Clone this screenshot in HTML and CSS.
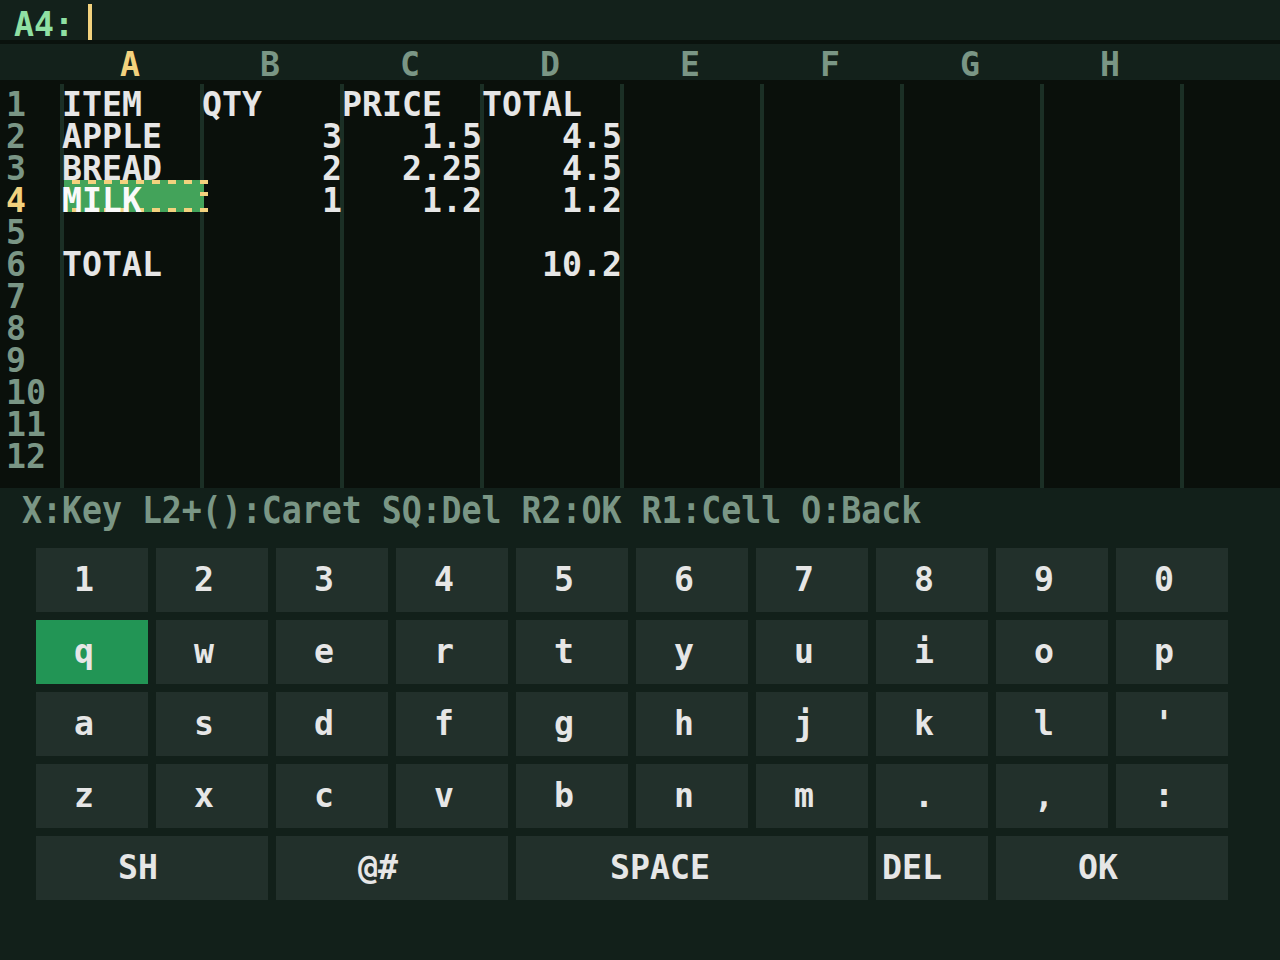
FILE: index.html
```html
<!doctype html>
<html lang="en">
  <head>
    <meta charset="UTF-8" />
    <title>Sheet</title>
    <link rel="stylesheet" href="styles.css">
  </head>
  <body>
    <div class="formula">
      <span class="ref">A4:</span><span class="caret"></span>
    </div>

    <div class="colhead">
      <div></div>
      <div class="on">A</div>
      <div>B</div>
      <div>C</div>
      <div>D</div>
      <div>E</div>
      <div>F</div>
      <div>G</div>
      <div>H</div>
      <div></div>
    </div>

    <div class="sheet">
      <div class="grid">
        <div class="row">
          <div class="rn">1</div><div>ITEM</div><div>QTY</div><div>PRICE</div><div>TOTAL</div>
        </div>
        <div class="row">
          <div class="rn">2</div><div>APPLE</div><div class="num">3</div><div class="num">1.5</div><div class="num">4.5</div>
        </div>
        <div class="row">
          <div class="rn">3</div><div>BREAD</div><div class="num">2</div><div class="num">2.25</div><div class="num">4.5</div>
        </div>
        <div class="row">
          <div class="rn on">4</div><div class="sel">MILK</div><div class="num">1</div><div class="num">1.2</div><div class="num">1.2</div>
        </div>
        <div class="row"><div class="rn">5</div></div>
        <div class="row">
          <div class="rn">6</div><div>TOTAL</div><div></div><div></div><div class="num">10.2</div>
        </div>
        <div class="row"><div class="rn">7</div></div>
        <div class="row"><div class="rn">8</div></div>
        <div class="row"><div class="rn">9</div></div>
        <div class="row"><div class="rn">10</div></div>
        <div class="row"><div class="rn">11</div></div>
        <div class="row"><div class="rn">12</div></div>
      </div>
    </div>

    <div class="hint"><span>X:Key L2+():Caret SQ:Del R2:OK R1:Cell O:Back</span></div>

    <div class="keys">
      <div class="key"><span>1</span></div>
      <div class="key"><span>2</span></div>
      <div class="key"><span>3</span></div>
      <div class="key"><span>4</span></div>
      <div class="key"><span>5</span></div>
      <div class="key"><span>6</span></div>
      <div class="key"><span>7</span></div>
      <div class="key"><span>8</span></div>
      <div class="key"><span>9</span></div>
      <div class="key"><span>0</span></div>

      <div class="key on"><span>q</span></div>
      <div class="key"><span>w</span></div>
      <div class="key"><span>e</span></div>
      <div class="key"><span>r</span></div>
      <div class="key"><span>t</span></div>
      <div class="key"><span>y</span></div>
      <div class="key"><span>u</span></div>
      <div class="key"><span>i</span></div>
      <div class="key"><span>o</span></div>
      <div class="key"><span>p</span></div>

      <div class="key"><span>a</span></div>
      <div class="key"><span>s</span></div>
      <div class="key"><span>d</span></div>
      <div class="key"><span>f</span></div>
      <div class="key"><span>g</span></div>
      <div class="key"><span>h</span></div>
      <div class="key"><span>j</span></div>
      <div class="key"><span>k</span></div>
      <div class="key"><span>l</span></div>
      <div class="key"><span>'</span></div>

      <div class="key"><span>z</span></div>
      <div class="key"><span>x</span></div>
      <div class="key"><span>c</span></div>
      <div class="key"><span>v</span></div>
      <div class="key"><span>b</span></div>
      <div class="key"><span>n</span></div>
      <div class="key"><span>m</span></div>
      <div class="key"><span>.</span></div>
      <div class="key"><span>,</span></div>
      <div class="key"><span>:</span></div>

      <div class="key w2 n2"><span>SH</span></div>
      <div class="key w2 n2"><span>@#</span></div>
      <div class="key w3 n5"><span>SPACE</span></div>
      <div class="key n3"><span>DEL</span></div>
      <div class="key w2 n2"><span>OK</span></div>
    </div>
  </body>
</html>
```

FILE: styles.css
```css
body {
  margin: 0;
  width: 1280px;
  height: 960px;
  overflow: hidden;
  background: #12201a;
  color: #e6e6e6;
  font-family: "DejaVu Sans Mono", "Liberation Mono", monospace;
  font-size: 33.2px;
  font-weight: bold;
}

/* formula bar */
.formula {
  display: flex;
  align-items: flex-start;
  height: 40px;
  padding-left: 14px;
  background: #13211b;
  border-bottom: 4px solid #0a120d;
}
.ref {
  color: #8fe0a3;
  line-height: 24px;
  padding-top: 12.5px;
}
.caret {
  width: 4px;
  height: 36px;
  margin: 4px 0 0 14px;
  background: #f2d27e;
}

/* column letters */
.colhead {
  display: grid;
  grid-template-columns: 60px repeat(9, 140px);
  height: 36px;
  box-sizing: border-box;
  padding-top: 8.5px;
  background: #13211b;
  color: #7a9685;
  line-height: 24px;
  text-align: center;
}
.colhead .on {
  color: #f2d27e;
}

/* cell grid */
.sheet {
  height: 408px;
  box-sizing: border-box;
  padding-top: 4px;
  background: #0a100b;
}
.grid {
  height: 404px;
  background: repeating-linear-gradient(90deg, #1b2f25 0 4px, transparent 4px 140px) 60px 0 no-repeat;
}
.row {
  display: grid;
  grid-template-columns: 60px repeat(9, 140px);
  height: 32px;
  white-space: nowrap;
}
.row > div {
  height: 32px;
  box-sizing: border-box;
  padding: 8.5px 0 0 2px;
  line-height: 23px;
}
.row .rn {
  padding-left: 6px;
  color: #7a9685;
}
.row .rn.on {
  color: #f2d27e;
}
.row .num {
  padding-left: 0;
  margin-right: -2px;
  text-align: right;
}

/* active cell */
.row .sel {
  position: relative;
  z-index: 0;
  color: #fafafa;
}
.sel::before,
.sel::after {
  content: "";
  position: absolute;
  z-index: -1;
  top: 0;
  bottom: 0;
  left: 4px;
}
.sel::before {
  right: -4px;
  background: #43a35a;
}
.sel::after {
  right: -8px;
  background:
    repeating-linear-gradient(90deg, transparent 0 8px, #f2d27e 8px 16px) left top / 100% 4px no-repeat,
    repeating-linear-gradient(90deg, transparent 0 8px, #f2d27e 8px 16px) left bottom / 100% 4px no-repeat,
    linear-gradient(#f2d27e, #f2d27e) right 0 top 12px / 8px 4px no-repeat;
}

/* controls hint */
.hint {
  height: 60px;
  box-sizing: border-box;
  padding: 10px 0 0 22px;
  color: #7a9685;
  line-height: 28px;
  white-space: nowrap;
}
.hint span {
  display: inline-block;
  transform: scaleY(1.12);
  transform-origin: 0 25.5px;
}

/* on-screen keyboard */
.keys {
  display: grid;
  grid-template-columns: repeat(10, 112px);
  grid-auto-rows: 64px;
  gap: 8px;
  padding-left: 36px;
}
.key {
  background: #22302b;
  line-height: 64px;
  text-align: center;
  white-space: nowrap;
}
.key span {
  padding-right: 16px;
}
.key.on {
  background: #229555;
}
.w2 {
  grid-column: span 2;
}
.w3 {
  grid-column: span 3;
}
.n2 span {
  padding-right: 28px;
}
.n3 span {
  padding-right: 40px;
}
.n5 span {
  padding-right: 64px;
}
```
